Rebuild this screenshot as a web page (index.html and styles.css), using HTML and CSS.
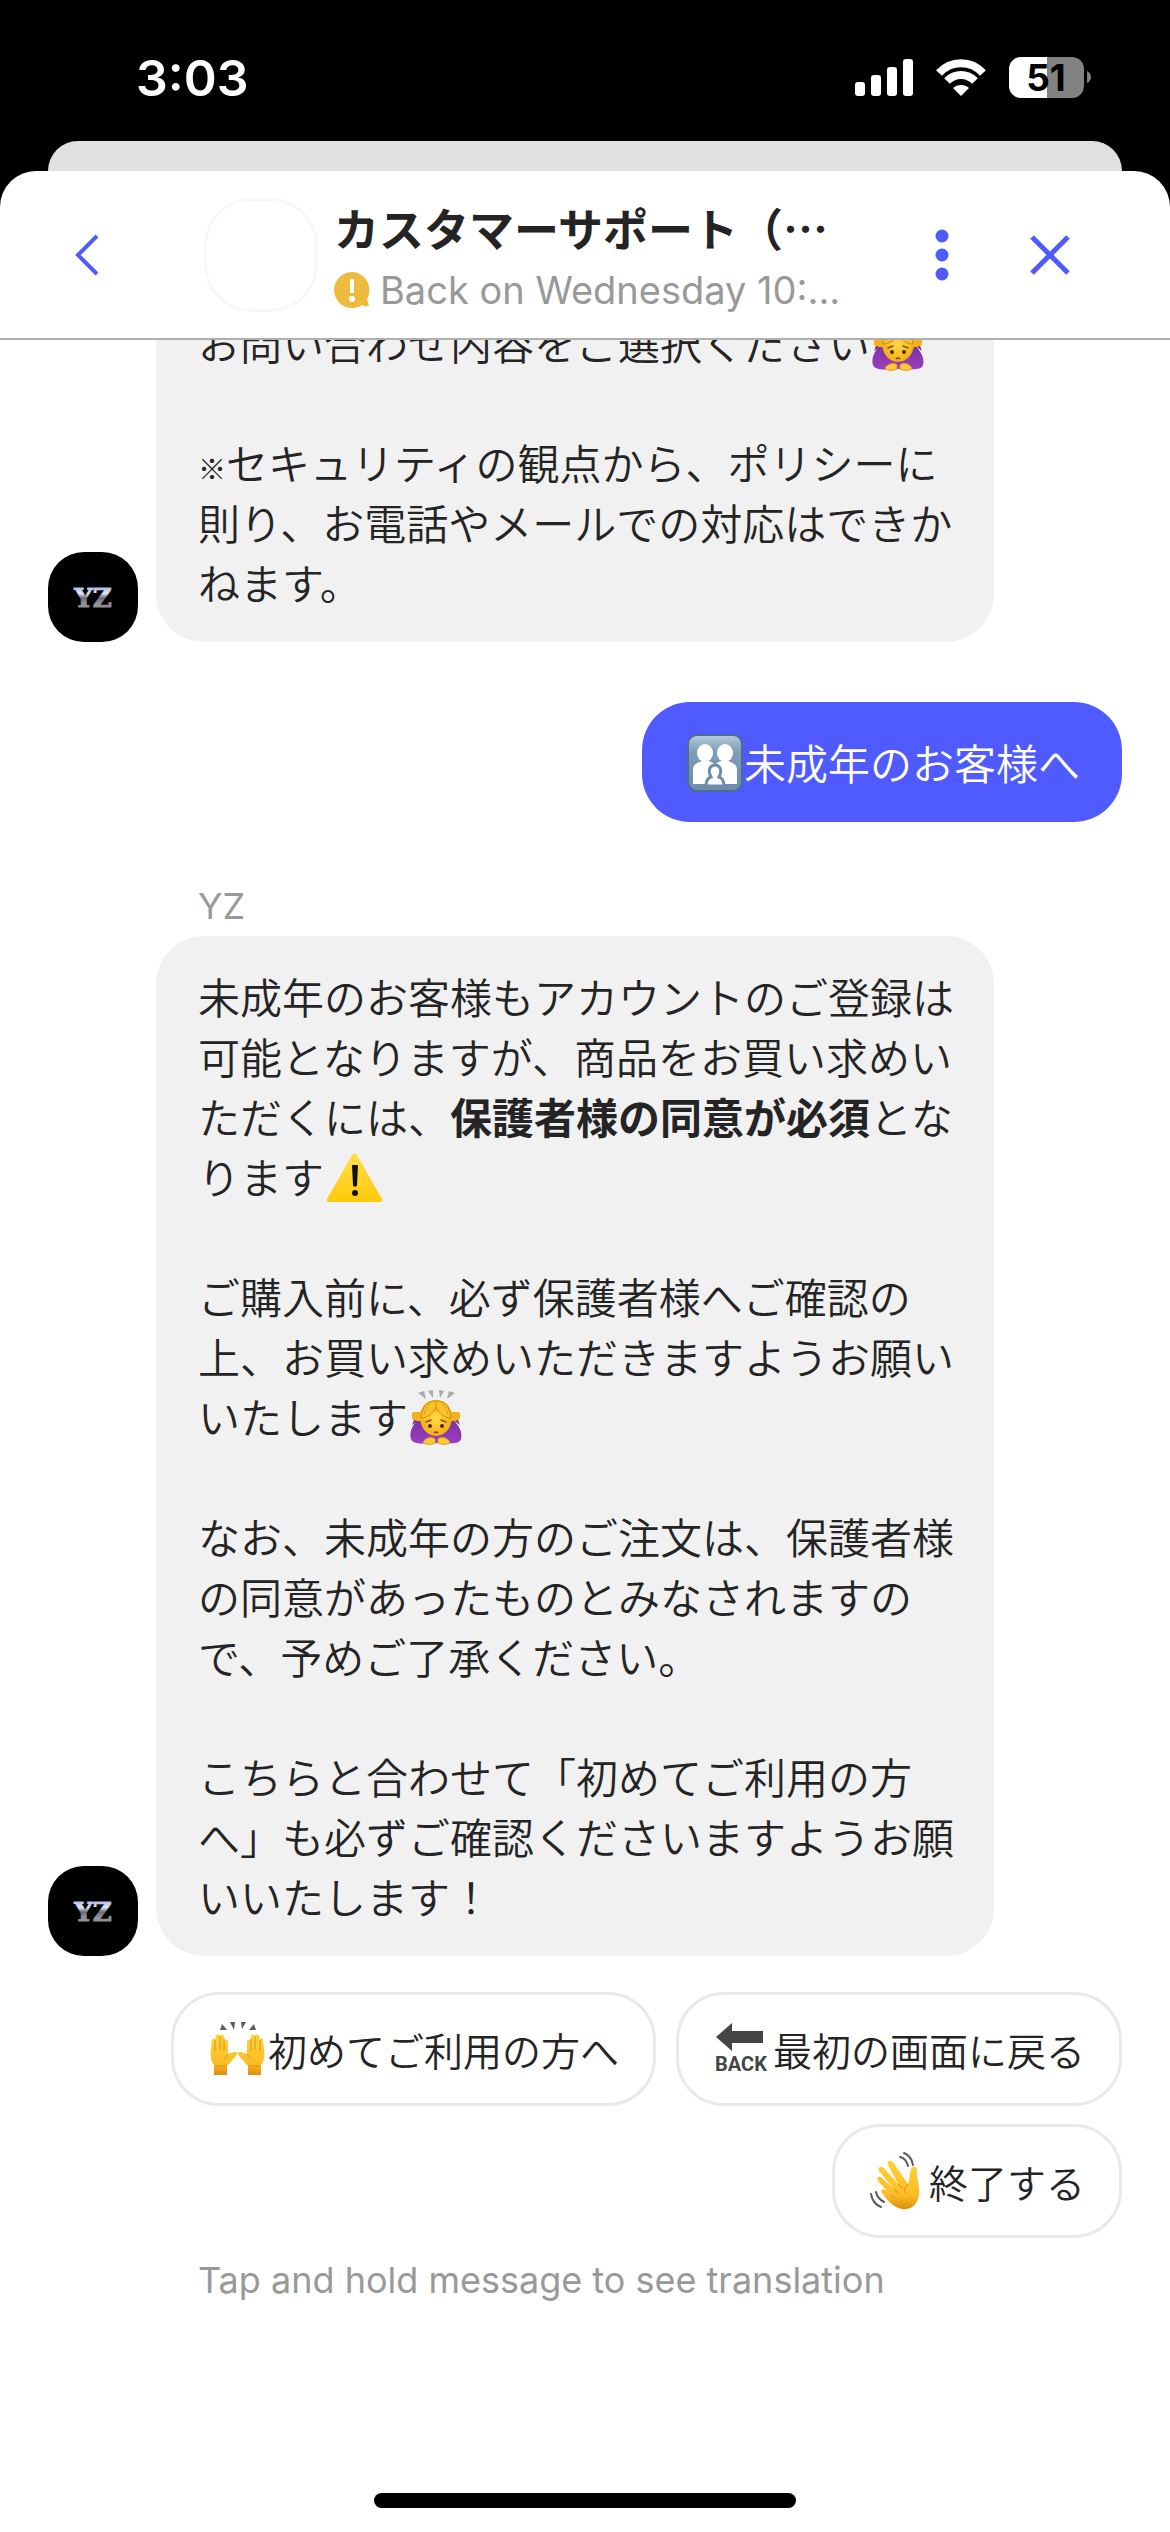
FILE: index.html
```html
<!DOCTYPE html>
<html lang="ja">
<head>
<meta charset="utf-8">
<meta name="viewport" content="width=device-width, initial-scale=1">
<title>カスタマーサポート</title>
<link rel="stylesheet" href="styles.css">
</head>
<body>
<svg class="sprite" aria-hidden="true">
  <defs>
    <linearGradient id="chrome" x1="0" y1="0" x2="0" y2="1">
      <stop offset="0" stop-color="#8fa3dc"/>
      <stop offset=".35" stop-color="#dfe5f5"/>
      <stop offset=".5" stop-color="#6d6c70"/>
      <stop offset=".7" stop-color="#98949a"/>
      <stop offset="1" stop-color="#8a8080"/>
    </linearGradient>
    <linearGradient id="slate" x1="0" y1="0" x2="0" y2="1">
      <stop offset="0" stop-color="#b4cbdb"/>
      <stop offset=".3" stop-color="#7f9db8"/>
      <stop offset="1" stop-color="#6d8cab"/>
    </linearGradient>
    <linearGradient id="amber" x1="0" y1="0" x2="0" y2="1">
      <stop offset="0" stop-color="#ffdf4a"/>
      <stop offset="1" stop-color="#ffc909"/>
    </linearGradient>
    <linearGradient id="skin" x1="0" y1="0" x2="0" y2="1">
      <stop offset="0" stop-color="#ffd23c"/>
      <stop offset=".7" stop-color="#fcbd26"/>
      <stop offset="1" stop-color="#dc8f0e"/>
    </linearGradient>
    <radialGradient id="face" cx=".5" cy=".5" r=".55">
      <stop offset="0" stop-color="#ffd94b"/>
      <stop offset="1" stop-color="#f2a912"/>
    </radialGradient>
    <linearGradient id="purple" x1="0" y1="0" x2="0" y2="1">
      <stop offset="0" stop-color="#7e2f9f"/>
      <stop offset="1" stop-color="#9a3fc0"/>
    </linearGradient>
  </defs>
  <symbol id="bow" viewBox="0 0 60 60">
    <path d="M10 7l6-2 2 8zM20 5l5-1 0 8zM31 4l5 1-4 7zM41 5l6 2-8 6z" fill="#aaa9ad"/>
    <path d="M11 32C4 39 1 47 3 53c2 5 10 5 20 4h14c9 1 15 0 16-4 2-6-2-14-9-21z" fill="url(#purple)"/>
    <path d="M4 31c-1-3 0-5 3-5h6v9H8c-3 0-4-2-4-4zM52 31c1-3 0-5-3-5h-6v9h5c3 0 4-2 4-4z" fill="#f3b21c"/>
    <path d="M9 35l-5 4 2-5zM47 35l5 4-2-5z" fill="#6f2894"/>
    <path d="M28 14c11 0 16 8 16 18 0 9-7 18-16 18s-16-9-16-18c0-10 5-18 16-18z" fill="url(#face)"/>
    <path d="M28 15c10 0 14 7 15 17-6 0-12-4-15-11-3 7-9 11-15 11 1-10 5-17 15-17z" fill="#f9c22e" stroke="#cf8d0c" stroke-width="1"/>
    <path d="M28 16v10M22 18c-4 3-5 7-6 11M34 18c4 3 5 7 6 11" stroke="#dca01a" stroke-width="1" fill="none"/>
    <circle cx="22" cy="40" r="2" fill="#4a2a08"/>
    <circle cx="34" cy="40" r="2" fill="#4a2a08"/>
    <path d="M18 36l5-2M33 34l5 2" stroke="#8a5207" stroke-width="1.500" stroke-linecap="round"/>
    <path d="M26 47q2-2 4 0" stroke="#8a3d07" stroke-width="1.500" fill="none"/>
    <path d="M15 56c2-4 9-6 12-3v4c-4 2-10 2-12-1zM42 56c-2-4-9-6-12-3v4c4 2 10 2 12-1z" fill="#ffc93a" stroke="#e09a15" stroke-width="1"/>
  </symbol>
  <symbol id="warning" viewBox="0 0 60 60">
    <path d="M28 9c1-2 4-2 5 0l25 44c1 2 0 3-2 3H5c-2 0-3-1-2-3z" fill="url(#amber)"/>
    <path d="M28 19h6l-1 20c0 2-4 2-4 0z" fill="#111"/>
    <circle cx="31" cy="47" r="3" fill="#111"/>
  </symbol>
  <symbol id="family" viewBox="0 0 60 60">
    <rect x="4" y="3" width="54" height="56" rx="9" fill="url(#slate)" stroke="#4d6b92" stroke-width="2"/>
    <g fill="#fff">
      <ellipse cx="21" cy="21" rx="8" ry="9"/>
      <ellipse cx="41" cy="21" rx="8" ry="9"/>
      <path d="M9 52V38c0-5 3-7 9-9h6c4 1 5 2 7 4 2-2 3-3 7-4h6c6 2 9 4 9 9v14z"/>
      <path d="M22 54c0-6 2-8 5-9-5-10 2-12 4-12s9 2 4 12c3 1 5 3 5 9z" stroke="#6d8cab" stroke-width="3"/>
    </g>
  </symbol>
  <symbol id="hands" viewBox="0 0 60 60">
    <path d="M14 5l5 6h-7zM22 3l5 0-1 8zM33 3h5l-4 7zM46 5l2 6h-7z" fill="#566062"/>
    <g id="palm">
      <path d="M6 56V46C3 42 2 37 3 30l1-9c0-2 3-2 3 0l1-4c0-2 4-2 4 0 1-2 4-2 4 1l1 3c1-1 3 0 3 2v12l6-2c3-1 4 2 2 4l-9 10v9z" fill="url(#skin)"/>
      <path d="M7 21v11M12 17v14M16 20v12M20 35l-4 5M7 47h11" stroke="#d9940f" stroke-width="1" fill="none"/>
    </g>
    <use href="#palm" transform="matrix(-1 0 0 1 59 0)"/>
  </symbol>
  <symbol id="wave" viewBox="0 0 60 60">
    <path d="M33 58C24 56 18 49 13 42c-2-3 1-5 4-3l5 5L9 30c-2-3 1-6 4-3l12 11L10 20c-2-3 2-6 5-3l14 16L19 14c-2-3 3-6 5-3l15 22c2-5 1-10 3-15 1-4 6-3 6 1-1 11 5 19 1 29-3 8-9 11-16 10z" fill="url(#skin)"/>
    <path d="M22 44l4 3M25 38l5 5M29 33l5 5M39 33c-3 2-4 6-3 9" stroke="#d9940f" stroke-width="1" fill="none"/>
    <path d="M31 6c4 1 7 4 8 9M35 2c5 2 8 6 9 12M7 41c1 5 4 8 8 10M2 43c1 6 5 11 10 13" stroke="#5a5a5a" stroke-width="2" fill="none" stroke-linecap="round"/>
  </symbol>
</svg>

<div class="phone">
  <div class="status-bar">
    <time class="clock">3:03</time>
    <div class="indicators">
      <svg width="58" height="42" viewBox="0 0 58 42" fill="#fff" aria-label="Signal">
        <rect x="0" y="25" width="10" height="14" rx="3"/>
        <rect x="16" y="18" width="10" height="21" rx="3"/>
        <rect x="32" y="10" width="10" height="29" rx="3"/>
        <rect x="48" y="2" width="10" height="37" rx="3"/>
      </svg>
      <svg width="52" height="42" viewBox="0 0 52 42" aria-label="Wi-Fi">
        <g fill="none" stroke="#fff" stroke-width="8">
          <path d="M4 16C16 3 36 3 48 16"/>
          <path d="M12 24c8-8 20-8 28 0"/>
        </g>
        <path d="M18 31c4-4 12-4 16 0l-8 8z" fill="#fff"/>
      </svg>
      <svg width="83" height="42" viewBox="0 0 83 42" aria-label="Battery">
        <path d="M39 0H12A12 12 0 0 0 0 12v17a12 12 0 0 0 12 12h27z" fill="#fff"/>
        <path d="M38 0h25a12 12 0 0 1 12 12v17a12 12 0 0 1-12 12H38z" fill="#828282"/>
        <path d="M78 14q4 2 4 6t-4 6z" fill="#828282"/>
        <text x="37" y="34" text-anchor="middle" class="battery-text">51</text>
      </svg>
    </div>
  </div>
  <div class="card-behind"></div>

  <div class="sheet">
    <header class="chat-header">
      <button class="icon-button" type="button" aria-label="Back">
        <svg width="42" height="42" viewBox="0 0 42 42"><path d="M31 2L12 21l19 19" fill="none" stroke="currentColor" stroke-width="4"/></svg>
      </button>
      <div class="team-avatar"></div>
      <div class="team">
        <h1>カスタマーサポート（…</h1>
        <p class="availability">
          <svg width="36" height="36" viewBox="0 0 36 36" aria-hidden="true">
            <path d="M18 0a18 18 0 0 1 15 27l2 7q-4 1-7-1A18 18 0 1 1 18 0z" fill="#edbb3d"/>
            <path d="M16 7h4v14h-4z" fill="#fff"/><circle cx="18" cy="27" r="3" fill="#fff"/>
          </svg>
          <span>Back on Wednesday 10:...</span>
        </p>
      </div>
      <button class="icon-button" type="button" aria-label="Menu">
        <svg width="42" height="52" viewBox="0 0 42 52" fill="currentColor"><circle cx="21" cy="7" r="6.500"/><circle cx="21" cy="26" r="6.500"/><circle cx="21" cy="45" r="6.500"/></svg>
      </button>
      <button class="icon-button" type="button" aria-label="Close">
        <svg width="42" height="42" viewBox="0 0 42 42"><path d="M3 3l36 36M39 3L3 39" stroke="currentColor" stroke-width="5"/></svg>
      </button>
    </header>

    <main class="messages">
      <article class="message">
        <svg class="avatar" viewBox="0 0 90 90"><text x="45" y="55" text-anchor="middle" class="logo-text">YZ</text></svg>
        <div class="bubble">
          <p>お問い合わせ内容をご選択ください<svg class="emoji"><use href="#bow"/></svg></p>
          <p><span class="mark">※</span>セキュリティの観点から、ポリシーに則り、お電話やメールでの対応はできかねます。</p>
        </div>
      </article>

      <article class="message own">
        <div class="bubble"><p><svg class="emoji"><use href="#family"/></svg>未成年のお客様へ</p></div>
      </article>

      <div class="group">
        <div class="caption">YZ</div>
        <article class="message">
          <svg class="avatar" viewBox="0 0 90 90"><text x="45" y="55" text-anchor="middle" class="logo-text">YZ</text></svg>
          <div class="bubble">
            <p>未成年のお客様もアカウントのご登録は可能となりますが、商品をお買い求めいただくには、<strong>保護者様の同意が必須</strong>となります<svg class="emoji"><use href="#warning"/></svg></p>
            <p>ご購入前に、必ず保護者様へご確認の上、お買い求めいただきますようお願いいたします<svg class="emoji"><use href="#bow"/></svg></p>
            <p>なお、未成年の方のご注文は、保護者様の同意があったものとみなされますので、予めご了承ください。</p>
            <p>こちらと合わせて「初めてご利用の方へ」も必ずご確認くださいますようお願いいたします！</p>
          </div>
        </article>
        <div class="replies">
          <button type="button"><svg class="emoji"><use href="#hands"/></svg>初めてご利用の方へ</button>
          <button type="button">
            <svg class="emoji" viewBox="0 0 60 60">
              <path d="M3 18L19 4v8h31v12H19v8z" fill="#454545"/>
              <text x="28" y="52" text-anchor="middle" class="back-text">BACK</text>
            </svg>最初の画面に戻る</button>
          <button type="button"><svg class="emoji"><use href="#wave"/></svg>終了する</button>
        </div>
        <div class="caption hint">Tap and hold message to see translation</div>
      </div>
    </main>
    <footer class="home-area"><div class="home-indicator"></div></footer>
  </div>
</div>
</body>
</html>
```

FILE: styles.css
```css
:root {
  --accent: #4f5bff;
  --ink: #242424;
  --muted: #999;
  --latin: Inter, "Liberation Sans", "Noto Sans CJK JP", sans-serif;
  --japanese: "Noto Sans CJK JP", sans-serif;
}

* { box-sizing: border-box; }

body, h1, p { margin: 0; }

body {
  background: #000;
  color: var(--ink);
  font-family: var(--japanese);
  text-spacing-trim: space-all;
}

button {
  margin: 0;
  border: 0;
  background: none;
  color: inherit;
  font: inherit;
  cursor: pointer;
}

.sprite {
  position: absolute;
  width: 0;
  height: 0;
}

.phone {
  display: flex;
  flex-direction: column;
  height: 100vh;
}

/* Status bar */
.status-bar {
  display: flex;
  flex: none;
  align-items: center;
  justify-content: space-between;
  height: 141px;
  padding: 15px 78px 0 136px;
  color: #fff;
}

.clock {
  font: 600 50px/60px var(--latin);
}

.indicators {
  display: flex;
  gap: 22px;
}

.battery-text {
  font: 700 37px var(--latin);
}

.card-behind {
  flex: none;
  height: 30px;
  margin: 0 48px;
  border-radius: 30px 30px 0 0;
  background: #e0e0e0;
}

/* Chat sheet */
.sheet {
  display: flex;
  flex: 1;
  flex-direction: column;
  min-height: 0;
  border-radius: 36px 36px 0 0;
  background: #fff;
}

.chat-header {
  display: flex;
  flex: none;
  align-items: center;
  height: 169px;
  padding: 0 99px 0 66px;
  border-bottom: 2px solid #b0b0b0;
}

.icon-button {
  display: flex;
  flex: none;
  justify-content: center;
  width: 42px;
  padding: 0;
  color: var(--accent);
}

.icon-button + .icon-button { margin-left: 66px; }

.team-avatar {
  flex: none;
  width: 114px;
  height: 114px;
  margin: 0 16px 0 96px;
  border: 3px solid #f8f8f8;
  border-radius: 48px;
}

.team {
  flex: 1;
  min-width: 0;
  padding-top: 8px;
}

.team h1 {
  overflow: hidden;
  margin-bottom: 2px;
  font-size: 45px;
  font-weight: 700;
  line-height: 60px;
  white-space: nowrap;
}

.availability {
  display: flex;
  gap: 10px;
  align-items: center;
  color: var(--muted);
  font: 400 38px/60px var(--latin);
  white-space: nowrap;
}

/* Messages */
.messages {
  display: flex;
  flex: 1;
  flex-direction: column;
  gap: 60px;
  justify-content: flex-end;
  min-height: 0;
  overflow: hidden;
  padding: 0 48px;
}

.message {
  display: flex;
  flex: none;
  gap: 18px;
  align-items: flex-end;
}

.own { justify-content: flex-end; }

.avatar {
  flex: none;
  width: 90px;
  height: 90px;
  border-radius: 36px;
  background: #000;
}

.logo-text {
  fill: url(#chrome);
  stroke: url(#chrome);
  stroke-width: 1px;
  font: 700 26px "DejaVu Serif", serif;
}

.bubble {
  display: flex;
  flex-direction: column;
  gap: 60px;
  max-width: 838px;
  padding: 30px 40px 30px 42px;
  border-radius: 48px;
  background: #f1f1f1;
  font-size: 42px;
  font-weight: 350;
  line-height: 60px;
}

.own .bubble {
  padding-right: 42px;
  background: var(--accent);
  color: #fff;
}

.bubble strong { font-weight: 700; }

.mark {
  font-size: 28px;
  font-weight: 700;
  line-height: 28px;
}

.emoji {
  width: 60px;
  height: 60px;
  vertical-align: top;
}

.caption {
  padding: 0 0 6px 150px;
  color: var(--muted);
  font: 400 36px/48px var(--latin);
}

.replies {
  display: flex;
  flex-wrap: wrap;
  gap: 18px 20px;
  justify-content: flex-end;
  margin-top: 36px;
}

.replies button {
  display: flex;
  align-items: center;
  height: 114px;
  padding: 0 34px;
  border: 3px solid #e9e9e9;
  border-radius: 48px;
  font-size: 39px;
  font-weight: 350;
}

.back-text {
  font: 700 20px Roboto, sans-serif;
  fill: #454545;
}

.hint { padding: 18px 0 0 150px; }

/* Home indicator */
.home-area {
  display: flex;
  flex: none;
  align-items: flex-end;
  justify-content: center;
  height: 228px;
  padding-bottom: 24px;
}

.home-indicator {
  width: 36%;
  height: 15px;
  border-radius: 8px;
  background: #000;
}
```
